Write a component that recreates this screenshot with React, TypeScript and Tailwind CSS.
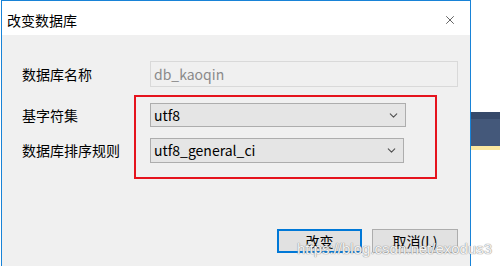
import { X, ChevronDown } from "lucide-react";

const cjk = { fontFamily: '"Noto Sans CJK SC", "Noto Sans", sans-serif' };

function Select({ value, width, height }: { value: string; width: string; height: string }) {
  return (
    <div
      className={`${width} ${height} bg-[#e5e5e5] border border-[#adadad] flex items-center justify-between pl-[3px] pr-[5px] text-[14px] text-black`}
    >
      <span>{value}</span>
      <ChevronDown className="w-[13px] h-[13px] text-[#505050]" strokeWidth={2} />
    </div>
  );
}

export default function App() {
  return (
    <div className="relative w-[500px] h-[266px] bg-white flex overflow-hidden" style={cjk}>
      {/* dialog */}
      <div className="ml-px w-[470px] h-[300px] border-x border-t border-[#1883d7] flex flex-col shrink-0">
        <div className="h-[34px] bg-white flex items-center justify-between pl-[5px] pr-[13px] pt-[4px]">
          <span className="text-[14px] text-black leading-none">改变数据库</span>
          <X className="w-[14px] h-[14px] text-[#222]" strokeWidth={1.2} />
        </div>

        <div className="flex-1 bg-[#f0f0f0] pl-[20px] pr-[12px] pt-[26px] text-[14px] text-black">
          <div className="flex items-center h-[26px]">
            <span className="w-[128px] shrink-0">数据库名称</span>
            <div className="w-[309px] h-[26px] border border-[#d9d9d9] bg-[#f0f0f0] flex items-center pl-[3px] text-[#8a8a8a]">
              db_kaoqin
            </div>
          </div>

          <div className="flex items-center mt-[16px]">
            <span className="w-[128px] shrink-0">基字符集</span>
            <Select value="utf8" width="w-[256px]" height="h-[24px]" />
          </div>

          <div className="flex items-center mt-[11px]">
            <span className="w-[128px] shrink-0">数据库排序规则</span>
            <Select value="utf8_general_ci" width="w-[254px]" height="h-[25px]" />
          </div>

          <div className="flex justify-end gap-[10px] mt-[66px]">
            <button className="w-[85px] h-[24px] bg-[#e1e1e1] border-2 border-[#0078d7] text-[14px] leading-none">
              改变
            </button>
            <button className="w-[86px] h-[24px] bg-[#e1e1e1] border border-[#adadad] text-[14px] leading-none">
              取消(L)
            </button>
          </div>
        </div>
      </div>

      {/* background window strip */}
      <div className="flex-1 pt-[112px]">
        <div className="h-[34px] bg-[#44587a] border-t-[7px] border-[#36496a]" />
        <div className="h-[4px] bg-[#fce8a0]" />
      </div>

      {/* annotation box */}
      <div className="absolute left-[134px] top-[95px] w-[303px] h-[84px] border-2 border-[#e5131d]" />

      {/* watermark */}
      <div
        className="absolute left-[297px] top-[238px] text-[15px] text-white/90 whitespace-nowrap"
        style={{ fontFamily: '"Liberation Sans", Arial, sans-serif', textShadow: "0 0 1px #888, 0 0 1px #888" }}
      >
        https://blog.csdn.net/exodus3
      </div>
    </div>
  );
}
